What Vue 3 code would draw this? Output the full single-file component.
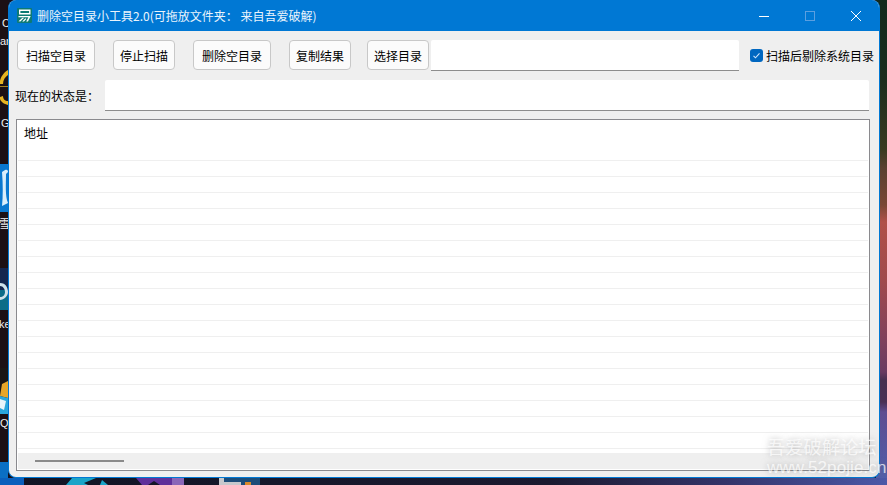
<script setup>
const rows = Array.from({ length: 19 }, (_, i) => i)
const buttons = [
  { label: '扫描空目录', w: 78, gap: 18 },
  { label: '停止扫描', w: 62, gap: 18 },
  { label: '删除空目录', w: 78, gap: 18 },
  { label: '复制结果', w: 62, gap: 16 },
  { label: '选择目录', w: 62, gap: 2 },
]
</script>

<template>
  <div class="desktop">
    <div class="bg-right"></div>
    <div class="bg-left">
      <svg class="left-art" width="8" height="485" viewBox="0 0 8 485">
        <path d="M8 70C1 74-1 82 0 84l3 0C3 80 5 77 8 75z" fill="#e6b422" />
        <path d="M8 105C3 104-1 100 0 97l3-1C3 99 5 101 8 101z" fill="#e6b422" />
        <path d="M0 86h8v1H0z" fill="#a8831c" />
        <rect y="164" width="8" height="48" fill="#0a78cf" />
        <path d="M2 172C7 168 8 170 8 172L6 174C6 184 5 196 8 203L2 206C3 196 3 184 2 172z" fill="#d9eefb" />
        <rect y="268" width="8" height="42" fill="#14264e" />
        <rect y="290" width="8" height="20" fill="#0c6d88" />
        <path d="M0 283C6 283 8 288 8 292C8 296 4 300 0 300v-3C3 297 5 295 5 292C5 289 3 286 0 286z" fill="#cfe2ea" />
        <rect y="368" width="8" height="44" fill="#1a1614" />
        <path d="M8 381L2 384L0 396L8 398z" fill="#e6a628" />
        <path d="M0 396L8 398V414H0z" fill="#2aa7dc" />
        <path d="M0 399L6 401L4 410L0 408z" fill="#e8f4fa" />
        <rect y="462" width="8" height="16" fill="#0a6fc4" />
      </svg>
      <span class="dt t0">C</span>
      <span class="dt t00">ar</span>
      <span class="dt t1">G</span>
      <span class="dt t2">雪</span>
      <span class="dt t3">ke</span>
      <span class="dt t4">Q</span>
    </div>
    <svg class="bg-bottom" width="887" height="7" viewBox="0 0 887 7">
      <defs>
        <linearGradient id="bottomBg" x1="0" x2="1" y1="0" y2="0">
          <stop offset="0" stop-color="#111424" />
          <stop offset="0.62" stop-color="#1b1a30" />
          <stop offset="0.82" stop-color="#34346a" />
          <stop offset="1" stop-color="#4c58a8" />
        </linearGradient>
      </defs>
      <rect width="887" height="7" fill="url(#bottomBg)" />
      <rect width="24" height="7" fill="#0a5fbc" />
      <path d="M66 7L72 0H96L84 5L88 7z" fill="#1aa4c8" />
      <path d="M102 2L108 7H100z" fill="#1aa4c8" />
      <path d="M136 0H172V7H160L154 3L148 7H142z" fill="#5f2f9a" />
      <rect x="172" width="12" height="7" fill="#8a66b8" />
      <rect x="219" width="5" height="7" fill="#c6c8cc" />
      <rect x="224" width="36" height="7" fill="#1c4c78" />
      <rect x="224" y="4" width="17" height="3" fill="#c6c8cc" />
      <rect x="245" y="4" width="6" height="3" fill="#d8892a" />
    </svg>

    <section class="window">
      <header class="titlebar">
        <svg class="logo" width="15" height="15" viewBox="0 0 15 15">
          <rect width="15" height="15" rx="1" fill="#0d7a74" />
          <path d="M2 1.5h11.5v5H2zM3.4 2.9v2.2h8.7V2.9z" fill="#fff" />
          <path d="M1.5 8h12.2L11 13.5H9.2L11.4 9.3H1.5z" fill="#fff" />
          <path d="M1.5 13.2L5.4 9.8h1.8L3.4 13.4zM5.2 13.4L8.4 10.2l1 .7-2.4 2.5z" fill="#fff" />
        </svg>
        <span class="title">删除空目录小工具2.0(可拖放文件夹： 来自吾爱破解)</span>
        <div class="controls">
          <span class="ctl"><svg width="10" height="10" viewBox="0 0 10 10"><path d="M0 5.5h10" stroke="#fff" fill="none" /></svg></span>
          <span class="ctl"><svg width="10" height="10" viewBox="0 0 10 10"><rect x=".5" y=".5" width="9" height="9" stroke="#5b9fe0" fill="none" /></svg></span>
          <span class="ctl"><svg width="10" height="10" viewBox="0 0 10 10"><path d="M0 0l10 10M10 0L0 10" stroke="#fff" fill="none" /></svg></span>
        </div>
      </header>

      <div class="body">
        <div class="toolbar">
          <button
            v-for="b in buttons"
            :key="b.label"
            class="btn"
            :style="{ width: b.w + 'px', marginRight: b.gap + 'px' }"
          >{{ b.label }}</button>
          <div class="field path"></div>
          <label class="check">
            <span class="box">
              <svg width="9" height="9" viewBox="0 0 9 9"><path d="M1.5 4.8l2 2 4-4.4" fill="none" stroke="#cfe4fa" stroke-width="1.1" /></svg>
            </span>
            <span>扫描后剔除系统目录</span>
          </label>
        </div>

        <div class="status">
          <span class="status-label">现在的状态是：</span>
          <div class="field status-field"></div>
        </div>

        <div class="table">
          <div class="thead">地址</div>
          <div class="tbody">
            <div v-for="r in rows" :key="r" class="row"></div>
          </div>
          <div class="hscroll"><div class="thumb"></div></div>
        </div>
      </div>
    </section>

    <div class="watermark">
      <div class="wm-a">吾爱破解论坛</div>
      <div class="wm-b">www.52pojie.cn</div>
    </div>
  </div>
</template>

<style>
html, body { margin: 0; padding: 0; overflow: hidden; }
</style>

<style scoped>
.desktop {
  position: relative;
  width: 887px;
  height: 485px;
  overflow: hidden;
  background: #14101c;
  font-family: "Noto Sans CJK SC", "Liberation Sans", sans-serif;
  font-size: 12px;
  color: #000;
}
.bg-right {
  position: absolute;
  left: 876px;
  top: 0;
  width: 11px;
  height: 485px;
  background: linear-gradient(180deg, #12291c 0px, #1c2c1c 80px, #3a3a20 150px, #5a4030 168px, #7a4634 205px, #b05048 222px, #a04a4c 280px, #80405c 340px, #6a3a60 372px, #483050 380px, #4a3054 402px, #5e4c90 412px, #5060ac 485px);
}
.bg-left { position: absolute; left: 0; top: 0; width: 8px; height: 485px; background: #1c1014; }
.left-art { position: absolute; left: 0; top: 0; }
.dt { position: absolute; left: 0; color: #eee; font-family: "Liberation Sans", sans-serif; font-size: 11px; line-height: 13px; white-space: nowrap; }
.t0 { top: 17px; left: 2px; }
.t00 { top: 35px; }
.t1 { top: 117px; left: 1px; }
.t2 { top: 217px; left: -1px; font-family: "Noto Sans CJK SC", sans-serif; }
.t3 { top: 318px; left: -1px; }
.t4 { top: 417px; left: 0; }
.bg-bottom { position: absolute; left: 0; top: 478px; display: block; }

.window {
  position: absolute;
  left: 8px;
  top: 0;
  width: 872px;
  height: 478px;
  box-sizing: border-box;
  display: flex;
  flex-direction: column;
  background: #efefef;
  border: 1px solid #0078d4;
  border-top: 0;
  border-radius: 8px;
  overflow: hidden;
}
.titlebar {
  height: 31px;
  flex: none;
  display: flex;
  align-items: center;
  background: #0078d4;
  color: #fff;
  padding-left: 8px;
}
.logo { flex: none; margin-top: -1px; }
.title { margin-left: 5px; font-size: 12px; line-height: 16px; color: #eaf4fc; white-space: nowrap; }
.controls { margin-left: auto; display: flex; }
.ctl { width: 46px; height: 31px; display: flex; align-items: center; justify-content: center; }

.body {
  flex: 1;
  display: flex;
  flex-direction: column;
  padding: 9px 10px 7px 8px;
}
.toolbar { display: flex; align-items: flex-start; height: 31px; }
.btn {
  height: 30px;
  box-sizing: border-box;
  flex: none;
  padding: 0;
  border: 1px solid #c8c8c8;
  border-radius: 4px;
  background: #fbfbfb;
  font: inherit;
  color: #000;
}
.field {
  box-sizing: border-box;
  height: 31px;
  background: #fff;
  border-bottom: 1px solid #8d8d8d;
  border-radius: 2px 2px 0 0;
}
.path { width: 308px; flex: none; }
.check {
  display: flex;
  align-items: center;
  height: 30px;
  margin-left: 11px;
  white-space: nowrap;
}
.box {
  width: 13px;
  height: 13px;
  margin-right: 3px;
  border-radius: 3px;
  background: #0067c0;
  display: flex;
  align-items: center;
  justify-content: center;
}
.status { display: flex; align-items: center; margin-top: 9px; }
.status-label { width: 90px; flex: none; margin-left: -2px; white-space: nowrap; }
.status-field { width: 764px; flex: none; }

.table {
  margin-top: 8px;
  margin-left: -1px;
  width: 854px;
  height: 352px;
  box-sizing: border-box;
  background: #fff;
  border: 1px solid #8a8a8e;
  display: flex;
  flex-direction: column;
  overflow: hidden;
}
.thead { height: 25px; padding: 4px 0 0 7px; box-sizing: border-box; line-height: 18px; }
.tbody { height: 307px; padding: 0 1px; box-sizing: border-box; overflow: hidden; }
.row { height: 16px; box-sizing: border-box; border-bottom: 1px solid #efefef; }
.hscroll {
  height: 16px;
  margin: 1px;
  flex: none;
  background: #efefef;
  position: relative;
}
.thumb { position: absolute; left: 17px; top: 7px; width: 89px; height: 2px; background: #8a8a8a; }

.watermark {
  position: absolute;
  left: 767px;
  top: 434px;
  color: rgba(255, 255, 255, 0.72);
  text-shadow: 0 0 6px rgba(120, 120, 120, 0.55);
  white-space: nowrap;
}
.wm-a { font-size: 18px; line-height: 24px; letter-spacing: 0.3px; }
.wm-b { font-family: "Liberation Sans", sans-serif; font-size: 17px; line-height: 20px; letter-spacing: 0.1px; }
</style>
